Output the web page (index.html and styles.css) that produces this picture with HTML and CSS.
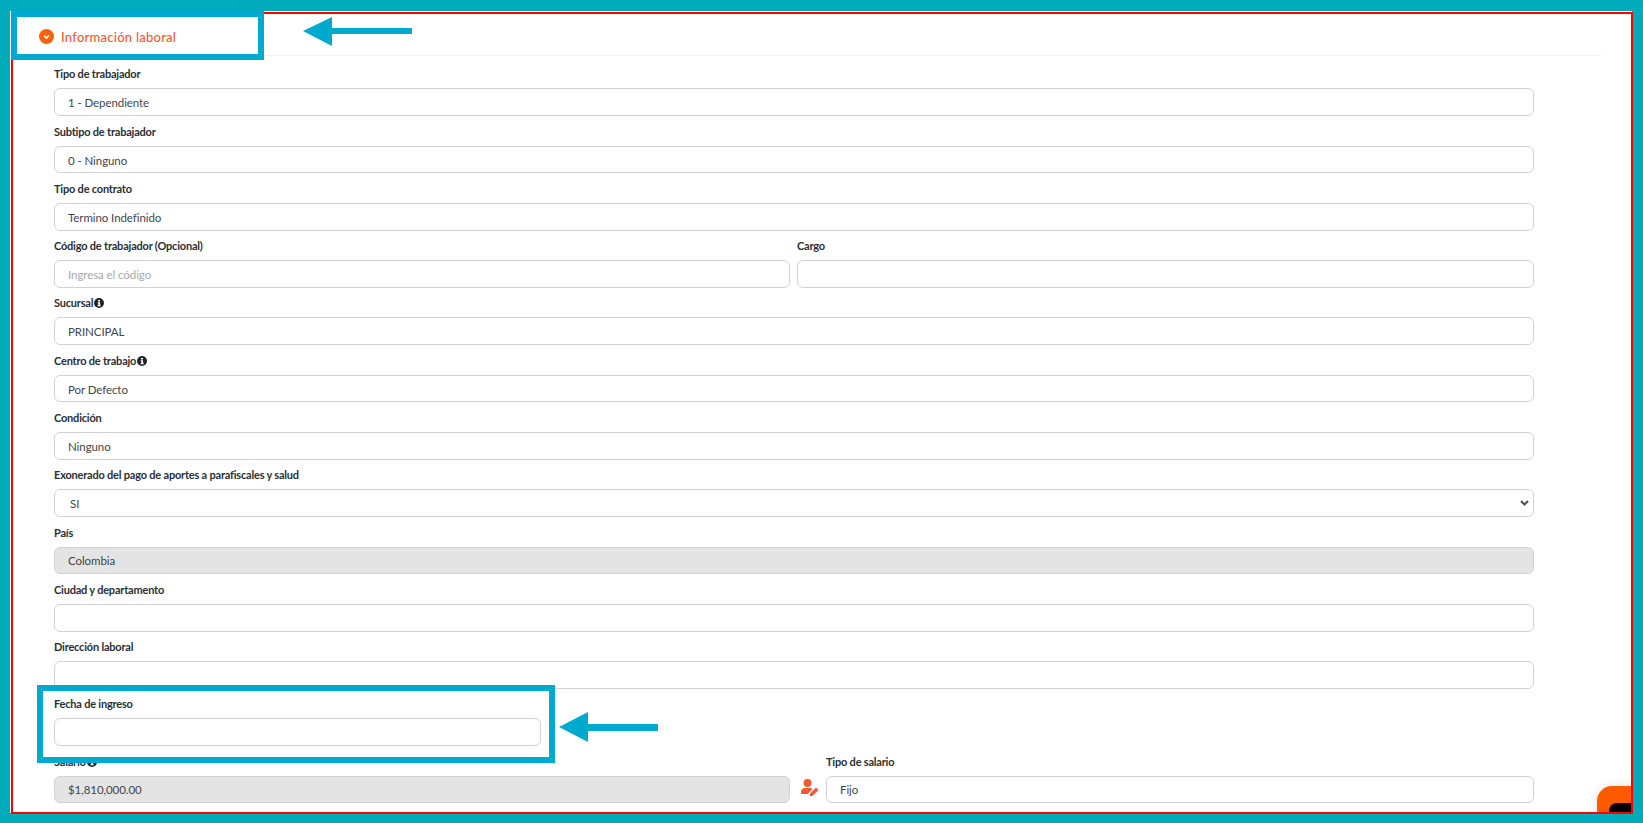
FILE: index.html
```html
<!DOCTYPE html>
<html lang="en">
<head>
    <meta charset="UTF-8">
    <meta name="viewport" content="width=device-width, initial-scale=1.0">
    <title>Información laboral</title>
    <link rel="stylesheet" href="styles.css">
</head>
<body>
    <div class="frame">
        <div class="section-header">
            <svg class="toggle-icon" viewBox="0 0 15 15" width="15" height="15">
                <circle cx="7.5" cy="7.5" r="7.5" fill="#ff5f0f"/>
                <path d="M5 6.5l2.5 2.5L10 6.5" fill="none" stroke="#fff" stroke-width="1.6"/>
            </svg>
            <span class="section-title">Información laboral</span>
        </div>

        <div class="form">
            <div class="field">
                <label class="label">Tipo de trabajador</label>
                <input type="text" class="input" value="1 - Dependiente">
            </div>
            <div class="field">
                <label class="label">Subtipo de trabajador</label>
                <input type="text" class="input" value="0 - Ninguno">
            </div>
            <div class="field">
                <label class="label">Tipo de contrato</label>
                <input type="text" class="input" value="Termino Indefinido">
            </div>
            <div class="row-half">
                <div class="field">
                    <label class="label">Código de trabajador (Opcional)</label>
                    <input type="text" class="input" placeholder="Ingresa el código">
                </div>
                <div class="field">
                    <label class="label">Cargo</label>
                    <input type="text" class="input">
                </div>
            </div>
            <div class="field">
                <label class="label">Sucursal
                    <svg class="info-icon" viewBox="0 0 10 10" width="10" height="10">
                        <circle cx="5" cy="5" r="5" fill="#212529"/>
                        <path d="M4 2h2v1.5H4zM3.6 4.3h2.5v3h.7v1H3.5v-1h.8v-2h-.7z" fill="#fff"/>
                    </svg>
                </label>
                <input type="text" class="input" value="PRINCIPAL">
            </div>
            <div class="field">
                <label class="label">Centro de trabajo
                    <svg class="info-icon" viewBox="0 0 10 10" width="10" height="10">
                        <circle cx="5" cy="5" r="5" fill="#212529"/>
                        <path d="M4 2h2v1.5H4zM3.6 4.3h2.5v3h.7v1H3.5v-1h.8v-2h-.7z" fill="#fff"/>
                    </svg>
                </label>
                <input type="text" class="input" value="Por Defecto">
            </div>
            <div class="field">
                <label class="label">Condición</label>
                <input type="text" class="input" value="Ninguno">
            </div>
            <div class="field">
                <label class="label">Exonerado del pago de aportes a parafiscales y salud</label>
                <select class="input select">
                    <option>SI</option>
                    <option>NO</option>
                </select>
            </div>
            <div class="field">
                <label class="label">País</label>
                <input type="text" class="input disabled" value="Colombia" disabled>
            </div>
            <div class="field">
                <label class="label">Ciudad y departamento</label>
                <input type="text" class="input">
            </div>
            <div class="field">
                <label class="label">Dirección laboral</label>
                <input type="text" class="input">
            </div>
            <div class="field field-date">
                <label class="label">Fecha de ingreso</label>
                <input type="text" class="input">
            </div>
            <div class="row-salary">
                <div class="field">
                    <label class="label">Salario
                        <svg class="info-icon" viewBox="0 0 10 10" width="10" height="10">
                            <circle cx="5" cy="5" r="5" fill="#212529"/>
                            <path d="M4 2h2v1.5H4zM3.6 4.3h2.5v3h.7v1H3.5v-1h.8v-2h-.7z" fill="#fff"/>
                        </svg>
                    </label>
                    <input type="text" class="input disabled" value="$1,810,000.00" disabled>
                </div>
                <svg class="edit-icon" viewBox="0 0 18 17" width="18" height="17">
                    <circle cx="6.5" cy="4" r="4" fill="#f4592f"/>
                    <path d="M0 14v-1.500C0 10.500 2 9 4 9h5c1 0 2 .4 2.600 1L7 14.500V15H1c-.6 0-1-.4-1-1z" fill="#f4592f"/>
                    <path d="M9 14.500l6-6 2.500 2.500-6 6H9z" fill="#f4592f"/>
                </svg>
                <div class="field">
                    <label class="label">Tipo de salario</label>
                    <input type="text" class="input" value="Fijo">
                </div>
            </div>
        </div>

        <div class="chat-widget"><div class="chat-bubble"></div></div>
    </div>

    <!-- anotaciones sobre la captura -->
    <div class="callout callout-header"></div>
    <div class="callout callout-date"></div>
    <svg class="arrow arrow-header" viewBox="0 0 110 30" width="110" height="30">
        <path d="M0 14L29 0v11h80v6H29v12z" fill="#00a9ce"/>
    </svg>
    <svg class="arrow arrow-date" viewBox="0 0 100 30" width="100" height="30">
        <path d="M0 15L29 0v12h70v7H29v11z" fill="#00a9ce"/>
    </svg>
</body>
</html>
```

FILE: styles.css
```css
* {
    box-sizing: border-box;
}
html, body {
    height: 100%;
}
body {
    margin: 0;
    height: 823px;
    overflow: hidden;
    position: relative;
    background-color: #00acbc;
    font-family: Lato, Arial, sans-serif;
    padding: 12px 10px 10px 11px;
}
.frame {
    position: relative;
    height: 801.5px;
    background-color: white;
    border: 2px solid #ff0000;
    box-shadow: -1px -1px 0 white;
    overflow: hidden;
}
.section-header {
    display: flex;
    align-items: center;
    gap: 7px;
    height: 42px;
    margin-right: 30px;
    padding-left: 26px;
    padding-top: 4px;
    border-bottom: 1px solid #f2f2f2;
}
.section-title {
    font-size: 13px;
    font-weight: 500;
    letter-spacing: 0.25px;
    color: #f4593a;
}
.form {
    padding: 2.9px 0 0 41px;
    width: 1521px;
}
.field {
    display: flex;
    flex-direction: column;
    height: 57.28px;
}
.field-date {
    width: 487px;
}
.label {
    display: flex;
    align-items: flex-end;
    gap: 1px;
    height: 29.5px;
    padding-bottom: 7px;
    font-size: 11px;
    line-height: 14px;
    font-weight: 700;
    letter-spacing: -0.2px;
    color: #2b2f33;
}
.info-icon {
    margin-bottom: 2px;
}
.input {
    width: 100%;
    height: 27.78px;
    padding: 1px 13px 0;
    font-family: Lato, Arial, sans-serif;
    font-size: 11.5px;
    letter-spacing: -0.08px;
    color: #3f464d;
    background-color: white;
    border: 1px solid #d2d2d2;
    border-radius: 6px;
    outline: none;
}
.input::placeholder {
    color: #a5a9ad;
}
.input.disabled {
    background-color: #e4e4e4;
    opacity: 1;
}
.select {
    appearance: none;
    padding-left: 15px;
    background-image: url("data:image/svg+xml,%3Csvg xmlns='http://www.w3.org/2000/svg' width='9' height='6'%3E%3Cpath d='M1 1l3.500 3.500L8 1' fill='none' stroke='%23495057' stroke-width='2'/%3E%3C/svg%3E");
    background-repeat: no-repeat;
    background-position: right 4px center;
}
.row-half {
    display: grid;
    grid-template-columns: 736px 737px;
    gap: 7px;
}
.row-salary {
    display: grid;
    grid-template-columns: 736px 36px 708px;
}
.edit-icon {
    margin: 32.5px 0 0 11px;
}
.chat-widget {
    position: absolute;
    left: 1584px;
    top: 772px;
    width: 60px;
    height: 60px;
    padding: 17px 0 0 12px;
    background-color: #ff5a00;
    border-radius: 15px;
    box-shadow: 0 0 12px rgba(0,0,0,0.12);
}
.chat-bubble {
    width: 40px;
    height: 30px;
    background-color: black;
    border-radius: 8px;
}
.callout {
    position: absolute;
    border: 6px solid #00a9ce;
}
.callout-header {
    left: 11px;
    top: 11px;
    width: 253px;
    height: 49px;
}
.callout-date {
    left: 37px;
    top: 685px;
    width: 518px;
    height: 78px;
}
.arrow {
    position: absolute;
}
.arrow-header {
    left: 303px;
    top: 17px;
}
.arrow-date {
    left: 559px;
    top: 712px;
}
```
